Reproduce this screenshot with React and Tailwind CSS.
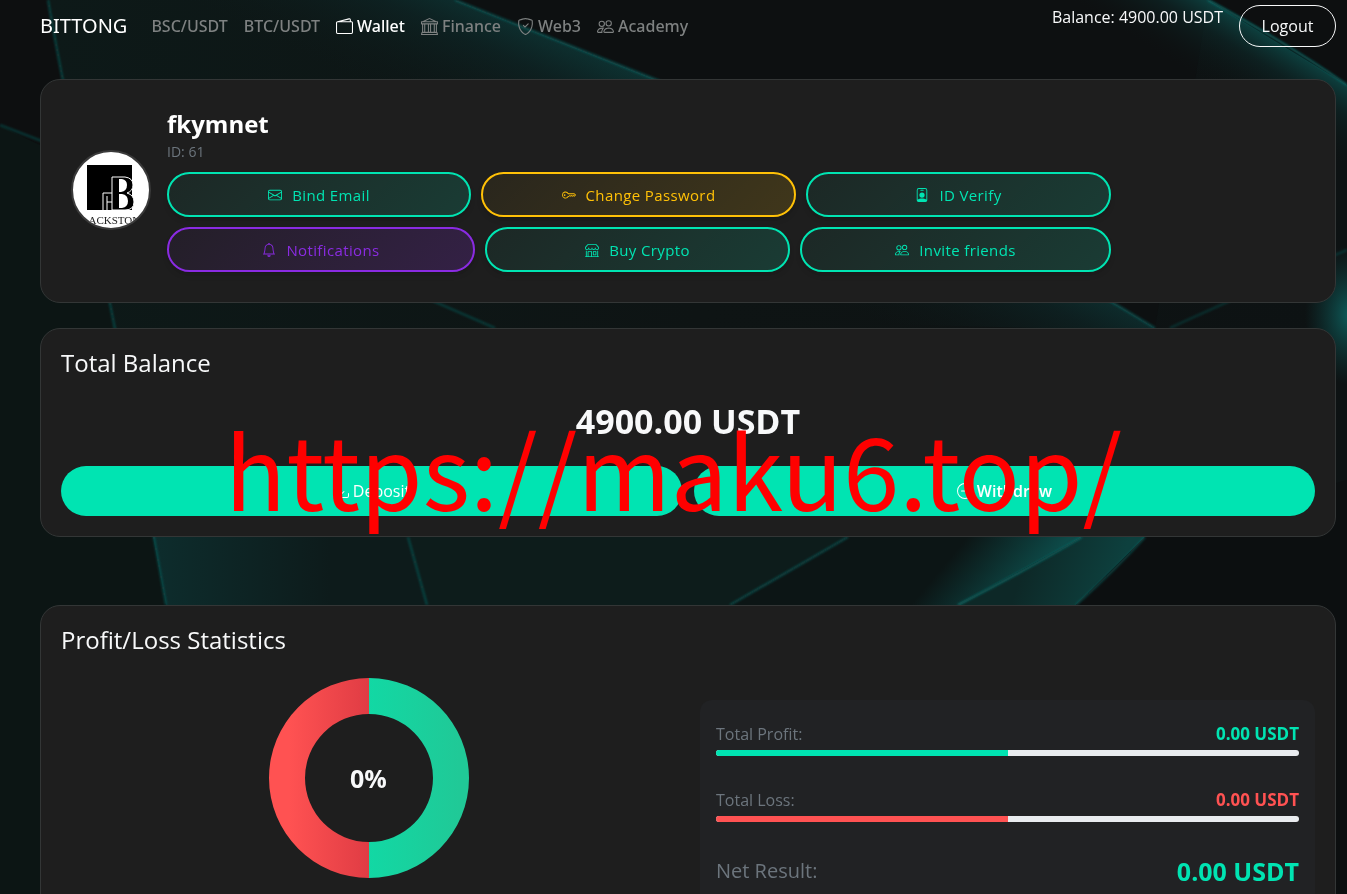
import clsx from "clsx";
import React from "react";
import {
  BsBank,
  BsBell,
  BsDashCircle,
  BsDownload,
  BsEnvelope,
  BsKey,
  BsPeople,
  BsPersonBadge,
  BsShieldCheck,
  BsShop,
  BsWallet2,
} from "react-icons/bs";

const NAV = [
  { label: "BSC/USDT" },
  { label: "BTC/USDT" },
  { label: "Wallet", icon: BsWallet2, active: true },
  { label: "Finance", icon: BsBank },
  { label: "Web3", icon: BsShieldCheck },
  { label: "Academy", icon: BsPeople },
];

const TONE = {
  teal: "border-[#00e4b2] text-[#00e4b2] from-[#00e4b2]/5 to-[#00e4b2]/15",
  amber: "border-[#ffc107] text-[#ffc107] from-[#ffc107]/5 to-[#ffc107]/15",
  purple: "border-[#8a2be2] text-[#8a2be2] from-[#8a2be2]/5 to-[#8a2be2]/20",
};

/* teal ribbons behind the page */
function Backdrop() {
  return (
    <svg
      className="fixed inset-0 -z-10 h-full w-full"
      viewBox="0 0 1347 894"
      preserveAspectRatio="xMidYMid slice"
      aria-hidden="true"
    >
      <defs>
        <linearGradient id="left" x1="0" x2="1">
          <stop offset="0" stopColor="#0d1918" />
          <stop offset="0.5" stopColor="#0e1414" />
          <stop offset="1" stopColor="#0d1213" />
        </linearGradient>
        <linearGradient id="sweep" gradientUnits="userSpaceOnUse" x1="800" y1="130" x2="740" y2="260">
          <stop offset="0" stopColor="#0d4a49" stopOpacity="0.7" />
          <stop offset="0.4" stopColor="#0d2b2c" stopOpacity="0.5" />
          <stop offset="1" stopColor="#0d1818" stopOpacity="0" />
        </linearGradient>
        <linearGradient id="fold" gradientUnits="userSpaceOnUse" x1="150" y1="0" x2="330" y2="0">
          <stop offset="0" stopColor="#0d2d2d" />
          <stop offset="1" stopColor="#0d1b1b" />
        </linearGradient>
        <linearGradient id="corner" gradientUnits="userSpaceOnUse" x1="1290" y1="45" x2="1250" y2="110">
          <stop offset="0" stopColor="#0d5351" stopOpacity="0.8" />
          <stop offset="0.4" stopColor="#0d2d2d" stopOpacity="0.5" />
          <stop offset="1" stopColor="#0d1414" stopOpacity="0" />
        </linearGradient>
        <linearGradient id="band" gradientUnits="userSpaceOnUse" x1="965" y1="540" x2="1025" y2="590">
          <stop offset="0" stopColor="#0c1515" />
          <stop offset="1" stopColor="#0d4a48" />
        </linearGradient>
        <linearGradient id="band2" gradientUnits="userSpaceOnUse" x1="1030" y1="550" x2="1115" y2="580">
          <stop offset="0" stopColor="#0d2827" />
          <stop offset="1" stopColor="#0d403e" />
        </linearGradient>
        <radialGradient id="glow">
          <stop offset="0" stopColor="#0e6563" stopOpacity="0.9" />
          <stop offset="1" stopColor="#0e4544" stopOpacity="0" />
        </radialGradient>
        <filter id="soft" x="-20%" y="-20%" width="140%" height="140%">
          <feGaussianBlur stdDeviation="1" />
        </filter>
      </defs>
      <rect width="1347" height="894" fill="#0d0f10" />
      <path d="M0 125 Q22 137 40 145 L108 294 Q135 430 166 605 L180 894 H0Z" fill="#0c1514" />
      <path d="M48 0 Q64 95 110 304 Q135 430 166 605 L180 894 H1347 V85 L1208 0Z" fill="url(#left)" />
      <path d="M455 0 L657 80 Q930 190 1155 328 L1208 0Z" fill="#0d1011" />
      <path d="M48 0 H455 L657 80 Q930 190 1155 328 L1040 328 L110 304Z" fill="url(#sweep)" />
      <path d="M840 0 H1208 L1347 85 V260 L840 100Z" fill="url(#corner)" />
      <path d="M153 537 L166 605 H730 L848 537Z" fill="url(#fold)" />
      <path d="M408 537 L427 605 H730 L848 537Z" fill="#0d1c1b" />
      <path d="M848 537 L730 605 H958 L1082 537Z" fill="url(#band)" />
      <path d="M1082 537 L958 605 H1076 L1145 537Z" fill="url(#band2)" />
      <path d="M1145 537 L1076 605 L1100 894 H1347 V480Z" fill="#0c0f10" />
      <ellipse cx="1350" cy="315" rx="45" ry="70" fill="url(#glow)" />
      <g fill="none" stroke="#0e6562" strokeWidth="2" filter="url(#soft)">
        <path d="M48 0 Q64 95 110 304 Q135 430 166 605" strokeOpacity="0.6" />
        <path d="M455 0 L657 80 Q930 190 1155 328" strokeOpacity="0.7" />
        <path d="M1208 0 Q1290 45 1347 85" />
        <path d="M0 125 Q250 220 495 328" strokeOpacity="0.5" />
        <path d="M408 537 L427 605" strokeOpacity="0.6" />
        <path d="M848 537 L730 605" strokeOpacity="0.7" />
        <path d="M1082 537 Q1030 568 958 605" />
        <path d="M1145 537 Q1115 570 1076 605" strokeOpacity="0.6" />
        <path d="M1170 328 Q1240 296 1347 250" strokeOpacity="0.4" />
      </g>
    </svg>
  );
}

function Avatar() {
  return (
    <svg className="h-20 w-20 shrink-0" viewBox="0 0 80 80" role="img" aria-label="fkymnet avatar">
      <defs>
        <clipPath id="avatar-clip">
          <circle cx="40" cy="40" r="38" />
        </clipPath>
      </defs>
      <circle cx="40" cy="40" r="39" fill="#fff" stroke="#3a3a3a" strokeWidth="2" />
      <g clipPath="url(#avatar-clip)">
        <rect x="16" y="15" width="45" height="45" fill="#000" />
        {/* monogram */}
        <path
          d="M41 60V27H54Q62 28 62 35Q62 41 56 43Q63 45 63 52Q63 60 54 60Z"
          fill="#000"
          stroke="#fff"
          strokeWidth="1"
        />
        <path d="M48 29H51Q56 30 56 35Q56 41 50 42H48ZM48 44H51Q57 45 57 51Q57 57 51 58H48Z" fill="#fff" />
        <path d="M32 60V43H41M36 60V46M36 52H41" fill="none" stroke="#fff" strokeWidth="1" />
        <text x="40" y="74" textAnchor="middle" fontSize="11" fill="#222" fontFamily="Liberation Serif, serif">
          LACKSTON
        </text>
      </g>
    </svg>
  );
}

function ActionButton({ icon: Icon, tone, children }) {
  return (
    <button
      type="button"
      className={clsx(
        "flex h-[45px] items-center justify-center gap-[10px] rounded-full border-2 bg-linear-135 text-[15px] leading-5 font-medium tracking-wide shadow-md",
        TONE[tone]
      )}
    >
      <Icon className="h-[14px] w-[14px]" />
      <span>{children}</span>
    </button>
  );
}

function Card({ className, children }) {
  return (
    <section className={clsx("rounded-[20px] border border-[#333636] bg-[#1e1e1e] px-5", className)}>
      {children}
    </section>
  );
}

function Meter({ label, value, percent, tone }) {
  const loss = tone === "loss";
  return (
    <div>
      <div className="flex justify-between leading-6">
        <span className="text-[16px] text-[#6c757d]">{label}</span>
        <span className={clsx("text-[17px] font-bold", loss ? "text-[#ff5252]" : "text-[#00e4b2]")}>{value}</span>
      </div>
      <div
        role="progressbar"
        aria-label={label}
        aria-valuenow={percent}
        className="mt-1 h-[6px] overflow-hidden rounded-full bg-[#e9ecef]"
      >
        <div className={clsx("h-full", loss ? "bg-[#ff5252]" : "bg-[#00e4b2]")} style={{ width: `${percent}%` }} />
      </div>
    </div>
  );
}

function Donut() {
  return (
    <div className="grid place-items-center">
      <svg className="col-start-1 row-start-1 h-[200px] w-[200px]" viewBox="0 0 200 200" aria-hidden="true">
        <defs>
          <linearGradient id="loss" gradientUnits="userSpaceOnUse" x1="20" y1="0" x2="100" y2="0">
            <stop offset="0" stopColor="#ff5252" />
            <stop offset="1" stopColor="#e03c44" />
          </linearGradient>
          <linearGradient id="profit" gradientUnits="userSpaceOnUse" x1="100" y1="0" x2="190" y2="0">
            <stop offset="0" stopColor="#12d8a4" />
            <stop offset="1" stopColor="#20c997" />
          </linearGradient>
        </defs>
        <path d="M100 0A100 100 0 0 0 100 200V164A64 64 0 0 1 100 36Z" fill="url(#loss)" />
        <path d="M100 0A100 100 0 0 1 100 200V164A64 64 0 0 0 100 36Z" fill="url(#profit)" />
      </svg>
      <span className="col-start-1 row-start-1 text-[25px] leading-8 font-bold">0%</span>
    </div>
  );
}

export default function App() {
  return (
    <div className="relative isolate min-h-screen overflow-hidden pr-[11px] pb-10 pl-10 font-['Open_Sans','Noto_Sans',sans-serif] text-[#f8f9fa]">
      <Backdrop />

      <header className="flex h-[79px] items-start justify-between pt-[5px]">
        <div className="flex h-[42px] items-center font-['Noto_Sans',sans-serif]">
          <a href="#home" className="mr-6 text-[20px] leading-8 text-white">
            BITTONG
          </a>
          <nav className="flex gap-4 text-[16px] leading-6">
            {NAV.map(({ label, icon: Icon, active }) => (
              <a
                key={label}
                href="#nav"
                className={clsx(
                  "flex items-center gap-1 font-medium",
                  active ? "text-white" : "text-[#7e8181]"
                )}
              >
                {Icon && <Icon className="h-[17px] w-[17px]" />}
                {label}
              </a>
            ))}
          </nav>
        </div>
        <div className="flex items-start gap-4">
          <span className="text-[16px] leading-6 font-medium">Balance: 4900.00 USDT</span>
          <button
            type="button"
            className="h-[42px] w-[97px] rounded-full border border-[#f8f9fa] text-[16px] leading-6 font-medium"
          >
            Logout
          </button>
        </div>
      </header>

      <main>
        <Card className="flex items-center gap-4 pt-7 pb-[30px] pl-[30px]">
          <Avatar />
          <div className="w-full max-w-[944px]">
            <h1 className="text-[24px] leading-8 font-bold text-white">fkymnet</h1>
            <p className="mb-2 text-[14px] leading-6 text-[#6c757d]">ID: 61</p>
            <div className="grid grid-cols-[304fr_315fr_305fr] gap-[10px]">
              <ActionButton icon={BsEnvelope} tone="teal">Bind Email</ActionButton>
              <ActionButton icon={BsKey} tone="amber">Change Password</ActionButton>
              <ActionButton icon={BsPersonBadge} tone="teal">ID Verify</ActionButton>
            </div>
            <div className="mt-[10px] grid grid-cols-[308fr_305fr_311fr] gap-[10px]">
              <ActionButton icon={BsBell} tone="purple">Notifications</ActionButton>
              <ActionButton icon={BsShop} tone="teal">Buy Crypto</ActionButton>
              <ActionButton icon={BsPeople} tone="teal">Invite friends</ActionButton>
            </div>
          </div>
        </Card>

        <Card className="mt-[25px] pt-4 pb-5">
          <h2 className="text-[24px] leading-9 font-medium">Total Balance</h2>
          <p className="mt-[15px] text-center text-[34px] leading-[50px] font-bold">4900.00 USDT</p>
          <div className="mt-5 grid grid-cols-2 gap-3">
            <button
              type="button"
              className="flex h-[50px] items-center justify-center gap-1 rounded-full bg-[#00e4b2] text-[16px] font-medium text-white"
            >
              <BsDownload className="h-4 w-4" />
              Deposit
            </button>
            <button
              type="button"
              className="flex h-[50px] items-center justify-center gap-1 rounded-full bg-[#00e4b2] text-[16px] font-semibold text-white"
            >
              <BsDashCircle className="h-4 w-4" />
              Withdraw
            </button>
          </div>
        </Card>

        <Card className="mt-[68px] pt-4 pb-6">
          <h2 className="text-[24px] leading-9 font-medium">Profit/Loss Statistics</h2>
          <div className="mt-5 grid grid-cols-2 items-start gap-6">
            <Donut />
            <div className="mt-[22px] flex flex-col gap-8 rounded-xl bg-[#212224] px-4 pt-[22px] pb-6">
              <Meter label="Total Profit:" value="0.00 USDT" percent={50} tone="profit" />
              <Meter label="Total Loss:" value="0.00 USDT" percent={50} tone="loss" />
              <div className="flex items-center justify-between leading-[34px]">
                <span className="text-[20px] font-medium text-[#6c757d]">Net Result:</span>
                <span className="text-[25px] font-bold text-[#00e4b2]">0.00 USDT</span>
              </div>
            </div>
          </div>
        </Card>
      </main>

      <div className="pointer-events-none absolute inset-x-0 top-[387px] text-center font-['Noto_Sans_CJK_SC',sans-serif] text-[101px] leading-[160px] whitespace-nowrap text-[#ff0000]">
        https://maku6.top/
      </div>
    </div>
  );
}
